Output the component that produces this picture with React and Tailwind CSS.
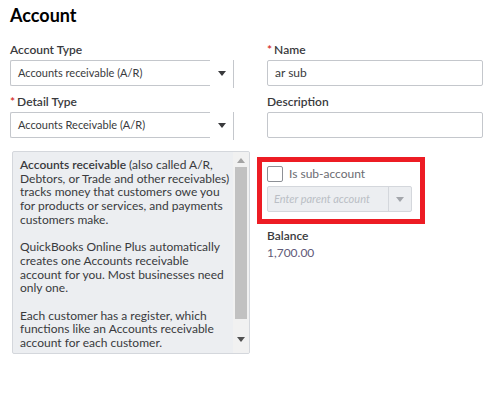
import React from "react";

const Caret = ({ className = "" }) => (
  <svg className={className} width="8" height="5" viewBox="0 0 8 5">
    <path d="M0 0h8L4 5z" fill="currentColor" />
  </svg>
);

const Label = ({ children, required }) => (
  <div className="h-[16px] leading-[16px] text-[12px] font-semibold text-[#393a3d] whitespace-nowrap">
    {required && <span className="text-[#d52b1e] mr-[2px]">*</span>}
    {children}
  </div>
);

// quickbooks style select, the arrow part has only a right border
const Select = ({ value, className = "" }) => (
  <div className={"flex h-[28px] w-[224px] " + className}>
    <div className="flex-1 h-[26px] border-l border-t border-b border-[#c4c7cc] rounded-l-[2px] flex items-center pl-[7px] text-[11px] text-[#393a3d] whitespace-nowrap">
      {value}
    </div>
    <div className="w-[24px] h-[28px] border-r border-[#c4c7cc] flex items-start justify-center pt-[11px] pl-[1px]">
      <Caret className="text-[#393a3d]" />
    </div>
  </div>
);

const Input = ({ value, className = "" }) => (
  <div className={"h-[26px] w-[216px] border border-[#c4c7cc] rounded-[2px] flex items-center pl-[7px] text-[12px] text-[#393a3d] " + className}>
    {value}
  </div>
);

export default function App() {
  return (
    <div
      className="w-[501px] h-[395px] bg-white pt-[3px] pl-[10px]"
      style={{ fontFamily: "Lato, 'Open Sans', sans-serif" }}
    >
      <h1 className="text-[18px] leading-[24px] font-bold text-[#000]">Account</h1>
      <div className="flex mt-[15px]">
        {/* left column */}
        <div className="w-[257px] flex flex-col">
          <Label>Account Type</Label>
          <Select className="mt-[2px]" value="Accounts receivable (A/R)" />
          <div className="mt-[6px]">
            <Label required>Detail Type</Label>
          </div>
          <Select className="mt-[2px]" value="Accounts Receivable (A/R)" />
          <div className="mt-[11px] ml-[2px] w-[238px] h-[203px] border border-[#d4d7dc] rounded-[2px] bg-[#eceef1] flex overflow-hidden">
            <div className="flex-1 pl-[7px] pt-[6px] text-[12px] leading-[13.7px] text-[#393a3d] whitespace-nowrap">
              <b className="font-semibold">Accounts receivable</b> (also called A/R,
              <br />
              Debtors, or Trade and other receivables)
              <br />
              tracks money that customers owe you
              <br />
              for products or services, and payments
              <br />
              customers make.
              <br />
              <br />
              QuickBooks Online Plus automatically
              <br />
              creates one Accounts receivable
              <br />
              account for you. Most businesses need
              <br />
              only one.
              <br />
              <br />
              Each customer has a register, which
              <br />
              functions like an Accounts receivable
              <br />
              account for each customer.
            </div>
            <div className="w-[16px] bg-[#f1f1f1] flex flex-col items-center">
              <div className="h-[15px] flex items-center justify-center pt-[1px]">
                <svg width="8" height="5" viewBox="0 0 8 5">
                  <path d="M0 5h8L4 0z" fill="#a3a3a3" />
                </svg>
              </div>
              <div className="w-[12px] h-[152px] bg-[#c1c1c1]" />
              <div className="flex-1" />
              <div className="h-[17px] flex items-start justify-center pt-[1px]">
                <Caret className="text-[#505050]" />
              </div>
            </div>
          </div>
        </div>

        {/* right column */}
        <div className="w-[216px] flex flex-col">
          <Label required>Name</Label>
          <Input className="mt-[2px]" value="ar sub" />
          <div className="mt-[8px]">
            <Label>Description</Label>
          </div>
          <Input className="mt-[2px]" />
          <div className="mt-[19px] -ml-[10px] w-[168px] h-[67px] border-[5px] border-[#ed1c24] pl-[5px] pt-[4px]">
            <div className="flex items-center h-[16px]">
              <div className="w-[16px] h-[16px] border border-[#8d9096] rounded-[2px] bg-white" />
              <span className="ml-[6px] text-[12px] text-[#6b6c72]">Is sub-account</span>
            </div>
            <div className="mt-[4px] w-[145px] h-[26px] border border-[#d4d7dc] rounded-[2px] bg-[#eceef1] flex">
              <div className="flex-1 flex items-center pl-[6px] text-[11px] italic text-[#babec5] whitespace-nowrap">
                Enter parent account
              </div>
              <div className="w-[23px] border-l border-[#d4d7dc] flex items-center justify-center">
                <Caret className="text-[#a3a6ab]" />
              </div>
            </div>
          </div>
          <div className="mt-[4px]">
            <Label>Balance</Label>
          </div>
          <div className="mt-[1px] h-[16px] leading-[16px] text-[12px] text-[#5f5a78]">1,700.00</div>
        </div>
      </div>
    </div>
  );
}
